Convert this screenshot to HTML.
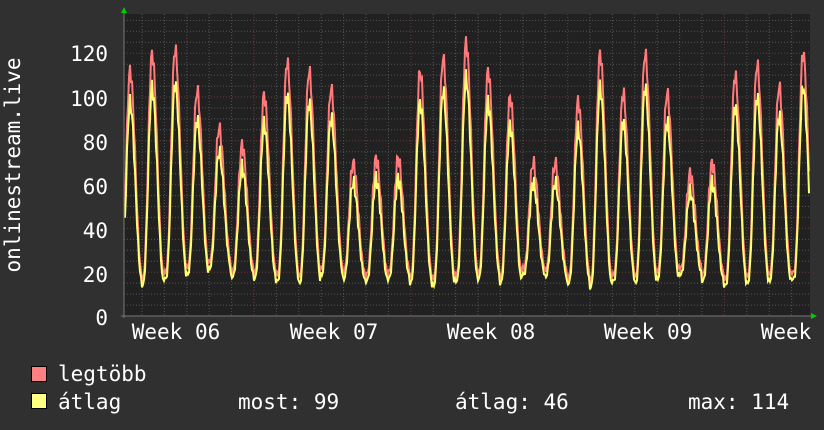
<!DOCTYPE html>
<html><head><meta charset="utf-8"><style>
body{margin:0;background:#303030;width:824px;height:430px;overflow:hidden;}
svg{display:block}
text{font-family:"DejaVu Sans Mono","Liberation Mono",monospace;font-size:21px;fill:#fff;}
</style></head><body>
<svg id="s" width="824" height="430" xmlns="http://www.w3.org/2000/svg">
<rect width="824" height="430" fill="#303030"/>
<rect x="124" y="14" width="686" height="302" fill="#212121"/>
<g id="grid"></g>
<path id="mx" fill="none" stroke="#ff7a7a" stroke-width="2"/>
<path id="av" fill="none" stroke="#ffff70" stroke-width="2"/>
<line x1="124" y1="12" x2="124" y2="318" stroke="#777" stroke-width="1"/>
<line x1="121" y1="316" x2="812" y2="316" stroke="#777" stroke-width="1"/>
<polygon points="121,13 127,13 124,7" fill="#00cc00"/>
<polygon points="811,313 811,319 817,316" fill="#00cc00"/>
<g text-anchor="end">
<text x="108" y="61">120</text><text x="108" y="106">100</text><text x="108" y="150">80</text>
<text x="108" y="194">60</text><text x="108" y="238">40</text><text x="108" y="282">20</text>
<text x="108" y="325">0</text></g>
<g text-anchor="middle">
<text x="176" y="339">Week 06</text><text x="334" y="339">Week 07</text>
<text x="491" y="339">Week 08</text><text x="648" y="339">Week 09</text>
<text x="786" y="339">Week</text></g>
<text transform="translate(20,165) rotate(-90)" text-anchor="middle">onlinestream.live</text>
<rect x="31.5" y="366.5" width="15" height="15" fill="#ff8080" stroke="#000"/>
<rect x="31.5" y="393.5" width="15" height="15" fill="#ffff80" stroke="#000"/>
<text x="58" y="381">legtöbb</text>
<text x="58" y="409">átlag</text>
<text x="238" y="409">most: 99</text>
<text x="455" y="409">átlag: 46</text>
<text x="688" y="409">max: 114</text>
</svg>
<script>
var g=document.getElementById('grid'),h='';
for(var v=5;v<=135;v+=5){var y=316-v*2.19;if(y<14)break;var maj=v%20==0;
h+='<line x1="124" x2="810" y1="'+y.toFixed(1)+'" y2="'+y.toFixed(1)+'" stroke="'+(maj?'#6a3a3a':'#555')+'" stroke-dasharray="1,2"/>';}
for(var i=1;i<31;i++){var x=142+(i-1)*22.4;if(x>810)break;var maj=(i%7==6);
h+='<line y1="14" y2="316" x1="'+x.toFixed(1)+'" x2="'+x.toFixed(1)+'" stroke="'+(maj?'#6a3a3a':'#555')+'" stroke-dasharray="1,2"/>';}
g.innerHTML=h;
var pk=[112,120,122,103,86,78,101,116,112,104,70,72,72,112,118,125,112,100,70,70,98,120,102,120,102,65,70,110,115,105,120];
var c=[130,152,175,197,219,242,264,287,309,331,353,376,398,420,443,466,488,510,533,555,578,600,623,645,667,690,712,735,757,779,803];
var tr=[18,17,20,22,25,21,20,19,18,22,20,19,20,18,17,19,20,18,22,21,18,16,19,18,20,22,19,17,18,19,20];
function val(x,a){var k=0,bd=1e9;for(var j=0;j<c.length;j++){var dd=Math.abs(x-c[j]);if(dd<bd){bd=dd;k=j;}}
var d=(x-c[k])/22.4; // -0.5..0.5
var dn=d<0?d/0.42:d/0.58; if(dn<-1)dn=-1; if(dn>1)dn=1;
var f=Math.pow((1+Math.cos(Math.PI*dn))/2,1.3);
var mn=tr[k]-(a<0.95?3:0);var p=pk[k]*a;
var v=mn+(p-mn)*f;
v+=Math.sin(x*2.3+a*5)*(1+f*3);
return v;}
function path(a){var s='';for(var x=125;x<=809;x+=1){var v=val(x,a);var y=316-v*2.19;s+=(x==125?'M':'L')+x+','+y.toFixed(1);}return s;}
document.getElementById('mx').setAttribute('d',path(1));
document.getElementById('av').setAttribute('d',path(0.87));
</script>
</body></html>
